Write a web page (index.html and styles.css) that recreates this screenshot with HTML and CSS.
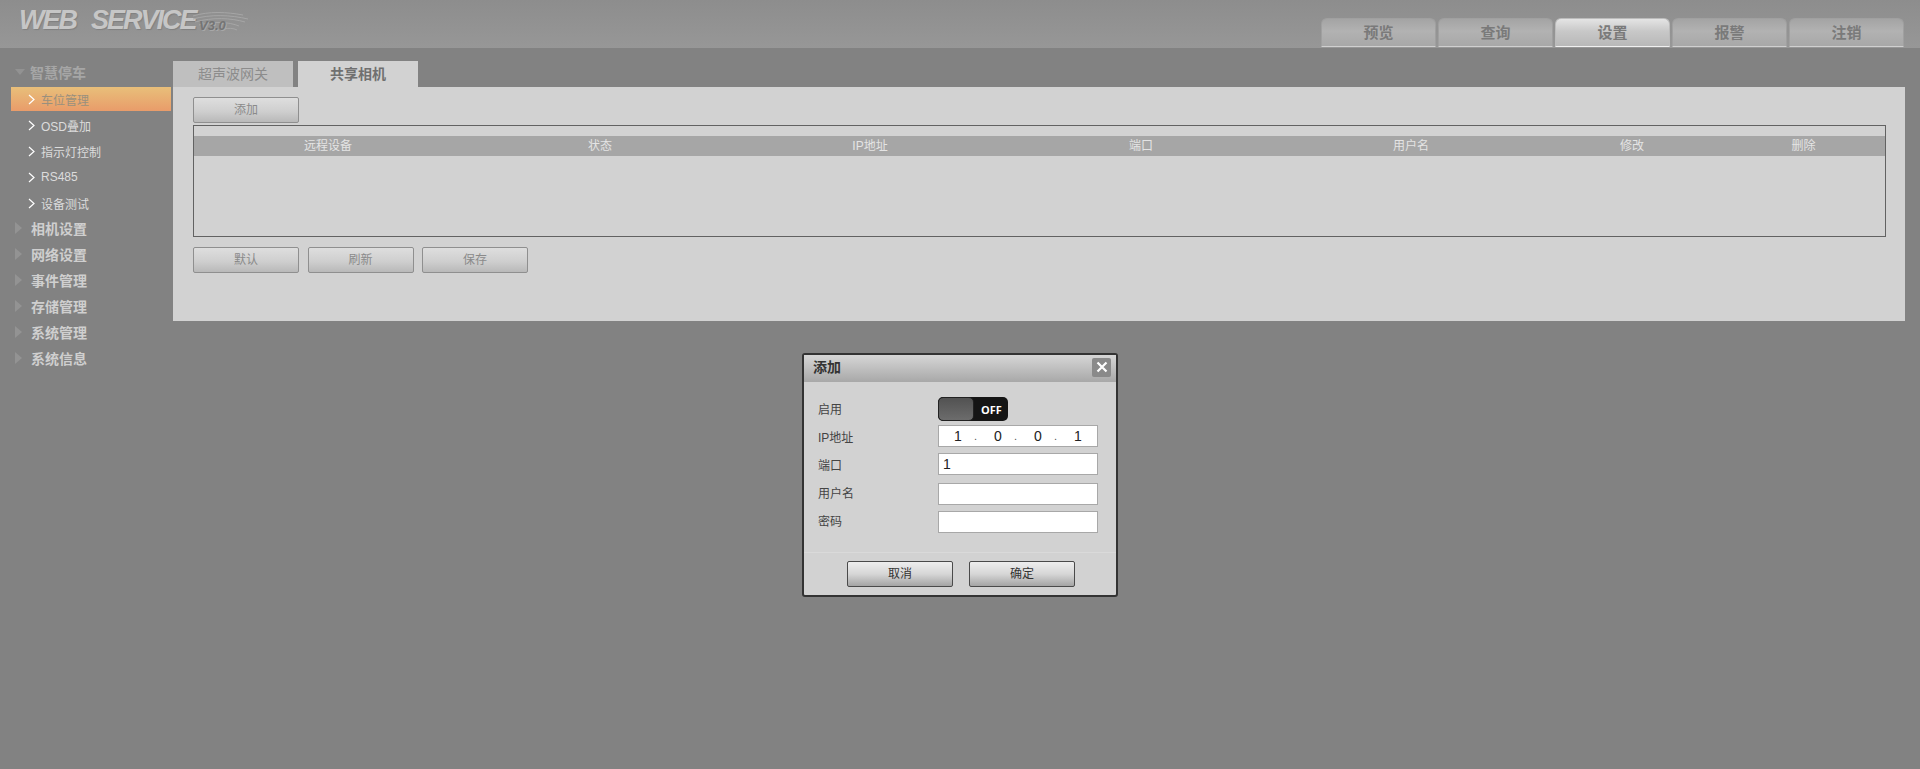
FILE: index.html
```html
<!DOCTYPE html>
<html lang="zh-CN">
<head>
    <meta charset="UTF-8">
    <title>WEB SERVICE</title>
    <link rel="stylesheet" href="styles.css">
</head>
<body>
    <div class="header">
        <div class="logo">
            <span class="logo-word">WEB</span>
            <span class="logo-word">SERVICE</span>
            <svg class="logo-swoosh" width="56" height="24" viewBox="0 0 56 24" fill="none" stroke="#a6a6a6" stroke-width="1">
                <path d="M0 8 C16 3 34 4 50 7"/>
                <path d="M0 11 C18 6 38 7 55 11"/>
                <path d="M2 14 C20 9 38 10 52 14"/>
                <path d="M6 17 C22 13 36 14 46 18"/>
                <path d="M30 21 C36 20 40 20 44 22"/>
            </svg>
            <span class="logo-version">V3.0</span>
        </div>
        <div class="main-nav">
            <div class="main-tab">预览</div>
            <div class="main-tab">查询</div>
            <div class="main-tab active">设置</div>
            <div class="main-tab">报警</div>
            <div class="main-tab">注销</div>
        </div>
    </div>

    <div class="main">
        <div class="sidebar">
            <div class="group open"><i class="tri-down"></i>智慧停车</div>
            <div class="sub-list">
                <div class="sub-item active"><svg class="chevron" width="7" height="11" viewBox="0 0 7 11"><path d="M1 1l5 4.5L1 10" fill="none" stroke="#fff" stroke-width="1.2"/></svg>车位管理</div>
                <div class="sub-item"><svg class="chevron" width="7" height="11" viewBox="0 0 7 11"><path d="M1 1l5 4.5L1 10" fill="none" stroke="#fff" stroke-width="1.2"/></svg>OSD叠加</div>
                <div class="sub-item"><svg class="chevron" width="7" height="11" viewBox="0 0 7 11"><path d="M1 1l5 4.5L1 10" fill="none" stroke="#fff" stroke-width="1.2"/></svg>指示灯控制</div>
                <div class="sub-item"><svg class="chevron" width="7" height="11" viewBox="0 0 7 11"><path d="M1 1l5 4.5L1 10" fill="none" stroke="#fff" stroke-width="1.2"/></svg>RS485</div>
                <div class="sub-item"><svg class="chevron" width="7" height="11" viewBox="0 0 7 11"><path d="M1 1l5 4.5L1 10" fill="none" stroke="#fff" stroke-width="1.2"/></svg>设备测试</div>
            </div>
            <div class="group"><i class="tri-right"></i>相机设置</div>
            <div class="group"><i class="tri-right"></i>网络设置</div>
            <div class="group"><i class="tri-right"></i>事件管理</div>
            <div class="group"><i class="tri-right"></i>存储管理</div>
            <div class="group"><i class="tri-right"></i>系统管理</div>
            <div class="group"><i class="tri-right"></i>系统信息</div>
        </div>

        <div class="content">
            <div class="tabs">
                <div class="tab">超声波网关</div>
                <div class="tab active">共享相机</div>
            </div>
            <div class="panel">
                <button class="btn">添加</button>
                <div class="table-box">
                    <div class="table-head">
                        <span>远程设备</span>
                        <span>状态</span>
                        <span>IP地址</span>
                        <span>端口</span>
                        <span>用户名</span>
                        <span>修改</span>
                        <span>删除</span>
                    </div>
                </div>
                <div class="btn-row">
                    <button class="btn">默认</button>
                    <button class="btn">刷新</button>
                    <button class="btn">保存</button>
                </div>
            </div>
        </div>
    </div>

    <div class="dialog">
        <div class="dialog-title">
            <span>添加</span>
            <div class="dialog-close">
                <svg width="12" height="12" viewBox="0 0 12 12"><path d="M1.5 1.5l9 9M10.5 1.5l-9 9" stroke="#fff" stroke-width="2.2"/></svg>
            </div>
        </div>
        <div class="dialog-body">
            <div class="form-row toggle-row">
                <label>启用</label>
                <div class="toggle"><div class="toggle-knob"></div><span>OFF</span></div>
            </div>
            <div class="form-row">
                <label>IP地址</label>
                <div class="field ip-field">
                    <span class="ip-num">1</span><span class="ip-dot">.</span>
                    <span class="ip-num">0</span><span class="ip-dot">.</span>
                    <span class="ip-num">0</span><span class="ip-dot">.</span>
                    <span class="ip-num">1</span>
                </div>
            </div>
            <div class="form-row">
                <label>端口</label>
                <div class="field">1</div>
            </div>
            <div class="form-row user-row">
                <label>用户名</label>
                <div class="field"></div>
            </div>
            <div class="form-row pass-row">
                <label>密码</label>
                <div class="field"></div>
            </div>
        </div>
        <div class="dialog-footer">
            <button class="btn btn-dark">取消</button>
            <button class="btn btn-dark">确定</button>
        </div>
    </div>
</body>
</html>
```

FILE: styles.css
```css
* {
    box-sizing: border-box;
}
body {
    margin: 0;
    height: 769px;
    overflow: hidden;
    background-color: #828282;
    font-family: "Liberation Sans", "Noto Sans CJK SC", sans-serif;
    font-size: 12px;
}

/* header */
.header {
    height: 48px;
    display: flex;
    justify-content: space-between;
    background: linear-gradient(#8d8d8d, #979797);
}
.logo {
    position: relative;
    display: flex;
    gap: 15px;
    padding: 5px 0 0 19px;
    height: 40px;
    font-size: 27px;
    line-height: 30px;
    font-weight: bold;
    font-style: italic;
    letter-spacing: -2px;
}
.logo-word {
    color: #c6c6c6;
    text-shadow: 1px 1px 1px #808080;
}
.logo-swoosh {
    position: absolute;
    left: 193px;
    top: 8px;
}
.logo-version {
    position: absolute;
    left: 199px;
    top: 18px;
    font-size: 13px;
    line-height: 16px;
    letter-spacing: 0;
    color: #747474;
    text-shadow: 1px 1px 0 #a8a8a8;
}
.main-nav {
    display: flex;
    gap: 2px;
    padding: 18px 16px 0 0;
}
.main-tab {
    width: 115px;
    height: 29px;
    border: 1px solid #a0a0a0;
    border-bottom: 1px solid #d0d0d0;
    border-radius: 6px 6px 0 0;
    background: linear-gradient(#a4a4a4, #b2b2b2 45%, #a8a8a8);
    color: #7a7a7a;
    font-size: 15px;
    font-weight: bold;
    line-height: 27px;
    text-align: center;
}
.main-tab.active {
    border-color: #bcbcbc #bcbcbc #f0f0f0;
    background: linear-gradient(#e4e4e4, #c8c8c8 45%, #b8b8b8);
}

/* sidebar */
.main {
    display: flex;
}
.sidebar {
    width: 173px;
    padding-top: 11px;
}
.group {
    height: 26px;
    display: flex;
    align-items: center;
    padding-left: 15px;
    gap: 9px;
    color: #cfcfcf;
    font-size: 14px;
    font-weight: bold;
}
.group.open {
    gap: 5px;
    color: #a6a6a6;
}
.tri-down {
    border-style: solid;
    border-width: 6px 5px 0;
    border-color: #929292 transparent transparent;
}
.tri-right {
    border-style: solid;
    border-width: 6px 0 6px 7px;
    border-color: transparent transparent transparent #939393;
}
.sub-list {
    margin: 2px 0 -2px;
}
.sub-item {
    height: 24px;
    margin: 0 2px 2px 11px;
    padding-left: 17px;
    display: flex;
    align-items: center;
    gap: 6px;
    color: #dcdcdc;
}
.sub-item.active {
    background: linear-gradient(#e8bf7a, #e99c6a);
    color: #99907e;
}

/* content */
.content {
    width: 1732px;
    padding-top: 13px;
}
.tabs {
    display: flex;
    gap: 5px;
}
.tab {
    width: 120px;
    height: 26px;
    background-color: #bfbfbf;
    color: #8c8c8c;
    font-size: 14px;
    line-height: 26px;
    text-align: center;
}
.tab.active {
    background-color: #d2d2d2;
    color: #707070;
    font-weight: bold;
}
.panel {
    height: 234px;
    padding: 10px 19px 0 20px;
    background-color: #d2d2d2;
}
.btn {
    display: block;
    width: 106px;
    height: 26px;
    padding: 0 0 3px;
    border: 1px solid #8f8f8f;
    border-radius: 2px;
    background: linear-gradient(#dedede, #cfcfcf 55%, #b9b9b9);
    color: #8a8a8a;
    font-family: inherit;
    font-size: 12px;
}
.table-box {
    height: 112px;
    margin-top: 2px;
    padding-top: 10px;
    border: 1px solid #626262;
}
.table-head {
    display: grid;
    grid-template-columns: 268px 276px 264px 278px 262px 180px 1fr;
    height: 20px;
    background-color: #a6a6a6;
    color: #e4e4e4;
    line-height: 20px;
    text-align: center;
}
.btn-row {
    display: flex;
    gap: 8.5px;
    margin-top: 10px;
}

/* add dialog */
.dialog {
    position: absolute;
    left: 802px;
    top: 353px;
    width: 316px;
    height: 244px;
    border: 2px solid #333;
    border-radius: 3px;
    background-color: #d2d2d2;
}
.dialog-title {
    height: 27px;
    display: flex;
    align-items: center;
    justify-content: space-between;
    padding: 0 5px 3px 9px;
    background: linear-gradient(#d6d6d6, #a8a8a8);
    color: #333;
    font-size: 14px;
    font-weight: bold;
}
.dialog-title span {
    margin-top: -2px;
}
.dialog-close {
    width: 19px;
    height: 19px;
    display: flex;
    align-items: center;
    justify-content: center;
    border-radius: 2px;
    background-color: #8a8a8a;
}
.dialog-body {
    height: 170px;
    padding: 15px 18px 0 14px;
    display: flex;
    flex-direction: column;
    gap: 6px;
}
.form-row {
    display: flex;
    align-items: center;
}
.form-row label {
    width: 120px;
    color: #444;
}
.toggle-row {
    margin-bottom: -2px;
}
.toggle-row label {
    margin-top: -1px;
}
.user-row {
    margin-top: 2px;
}
.user-row label,
.pass-row label {
    margin-top: -3px;
}
.toggle {
    width: 70px;
    height: 24px;
    display: flex;
    align-items: center;
    gap: 7px;
    border-radius: 5px;
    background-color: #151515;
    color: #fff;
    font-family: "Open Sans", sans-serif;
    font-size: 11px;
    font-weight: bold;
}
.toggle-knob {
    width: 36px;
    height: 24px;
    border-radius: 5px;
    border: 1px solid #222;
    background: linear-gradient(#525252, #6c6c6c);
}
.field {
    width: 160px;
    height: 22px;
    border: 1px solid #a8a8a8;
    background-color: #fff;
    padding-left: 4px;
    color: #222;
    font-size: 14px;
    line-height: 20px;
}
.ip-field {
    display: flex;
    padding-left: 3px;
}
.ip-num {
    width: 32px;
    text-align: center;
}
.ip-dot {
    width: 8px;
    color: #555;
    font-size: 11px;
}
.dialog-footer {
    height: 43px;
    display: flex;
    justify-content: center;
    gap: 16px;
    padding: 8px 0 0 2px;
    border-top: 1px solid #dadada;
}
.btn-dark {
    border-color: #4a4a4a;
    background: linear-gradient(#eeeeee, #d6d6d6 50%, #a4a4a4);
    color: #333;
}
```
